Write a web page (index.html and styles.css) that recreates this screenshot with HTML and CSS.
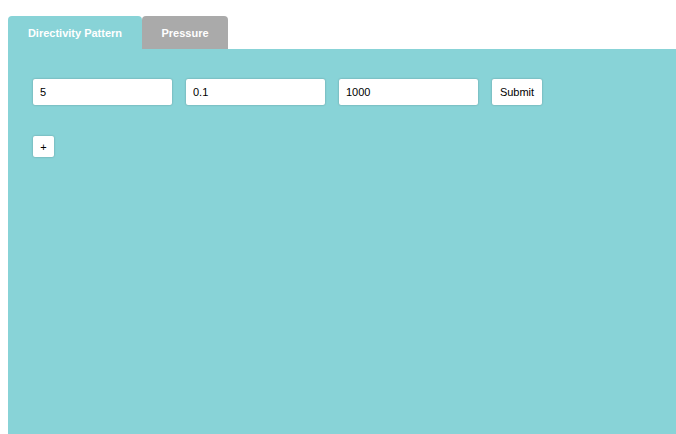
FILE: index.html
```html
<!DOCTYPE html>
<html>
<head>
<meta charset="utf-8">
<link rel="stylesheet" href="styles.css">
</head>
<body>
<div class="tabs">
  <div class="tab active">Directivity Pattern</div>
  <div class="tab">Pressure</div>
</div>
<div class="panel">
  <form class="row">
    <input class="field" type="text" value="5">
    <input class="field" type="text" value="0.1">
    <input class="field" type="text" value="1000">
    <button class="btn" type="button">Submit</button>
  </form>
  <div class="row2">
    <button class="btn plus" type="button">+</button>
  </div>
</div>
</body>
</html>
```

FILE: styles.css
```css
html, body {
  margin: 0;
  padding: 0;
  background: #fff;
  font-family: "Liberation Sans", Arial, sans-serif;
}
body {
  padding: 16px 0 0 8px;
  height: 434px;
  box-sizing: border-box;
  overflow: hidden;
  display: flex;
  flex-direction: column;
}
.tabs {
  display: flex;
  height: 33px;
}
.tab {
  height: 33px;
  box-sizing: border-box;
  display: flex;
  align-items: center;
  justify-content: center;
  color: #fff;
  font-size: 11px;
  font-weight: bold;
  border-radius: 4px 4px 0 0;
  background: #aaaaaa;
  width: 86px;
  padding-top: 1px;
}
.tab.active {
  background: #88d3d7;
  width: 134px;
}
.panel {
  flex: 1;
  background: #88d3d7;
  padding: 30px 25px;
}
.row {
  display: flex;
  gap: 14px;
  margin: 0;
}
.field {
  width: 139px;
  height: 26px;
  box-sizing: border-box;
  border: none;
  border-radius: 2px;
  background: #fff;
  box-shadow: 0 0 2px rgba(0,0,0,0.3);
  padding: 0 7px;
  font-family: "Liberation Sans", Arial, sans-serif;
  font-size: 11px;
  color: #000;
  outline: none;
}
.btn {
  height: 26px;
  box-sizing: border-box;
  border: none;
  border-radius: 2px;
  background: #fff;
  box-shadow: 0 0 2px rgba(0,0,0,0.3);
  padding: 0;
  font-family: "Liberation Sans", Arial, sans-serif;
  font-size: 11px;
  color: #000;
  width: 50px;
}
.row2 {
  margin-top: 31px;
}
.plus {
  width: 21px;
  height: 21px;
  padding: 0;
  font-size: 11px;
  display: block;
}
```
